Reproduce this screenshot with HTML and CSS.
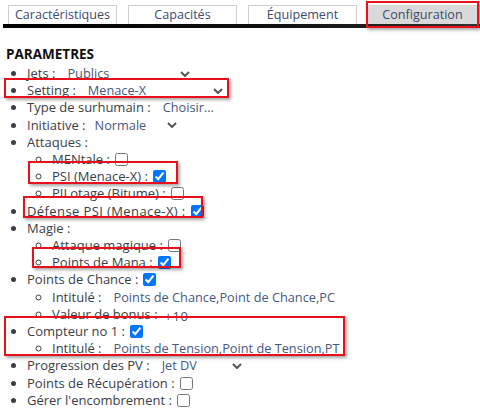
FILE: index.html
```html
<!DOCTYPE html>
<html lang="fr">
<head>
<meta charset="utf-8">
<title>Configuration</title>
<link rel="stylesheet" href="styles.css">
</head>
<body>
<div class="page">
  <nav class="tabs">
    <div class="tab">Caractéristiques</div>
    <div class="tab">Capacités</div>
    <div class="tab">Équipement</div>
    <div class="tab active">Configuration</div>
  </nav>
  <div class="tabbar"></div>

  <main class="content">
    <h3 class="title">PARAMETRES</h3>
    <ul class="list">
      <li><span class="lbl">Jets :</span><span class="sel sel-jets"><span class="val">Publics</span><svg class="chev" viewBox="0 0 10 6"><path d="M1 1 5 5 9 1"/></svg></span></li>
      <li><span class="lbl">Setting :</span><span class="sel sel-setting"><span class="val">Menace-X</span><svg class="chev" viewBox="0 0 10 6"><path d="M1 1 5 5 9 1"/></svg></span></li>
      <li><span class="lbl">Type de surhumain :</span><span class="sel"><span class="val">Choisir...</span></span></li>
      <li><span class="lbl">Initiative :</span><span class="sel sel-init"><span class="val">Normale</span><svg class="chev" viewBox="0 0 10 6"><path d="M1 1 5 5 9 1"/></svg></span></li>
      <li><span class="lbl">Attaques :</span>
        <ul class="sub">
          <li><span class="lbl">MENtale :</span><input class="cb" type="checkbox"></li>
          <li><span class="lbl">PSI (Menace-X) :</span><input class="cb" type="checkbox" checked></li>
          <li><span class="lbl">PILotage (Bitume) :</span><input class="cb" type="checkbox"></li>
        </ul>
      </li>
      <li><span class="lbl lbl-wide">Défense PSI (Menace-X) :</span><input class="cb" type="checkbox" checked></li>
      <li><span class="lbl">Magie :</span>
        <ul class="sub">
          <li><span class="lbl">Attaque magique :</span><input class="cb" type="checkbox"></li>
          <li><span class="lbl">Points de Mana :</span><input class="cb" type="checkbox" checked></li>
        </ul>
      </li>
      <li><span class="lbl">Points de Chance :</span><input class="cb" type="checkbox" checked>
        <ul class="sub">
          <li><span class="lbl">Intitulé :</span><span class="sel"><span class="val">Points de Chance,Point de Chance,PC</span></span></li>
          <li><span class="lbl">Valeur de bonus :</span><span class="sel num"><span class="val">+10</span></span></li>
        </ul>
      </li>
      <li><span class="lbl">Compteur no 1 :</span><input class="cb" type="checkbox" checked>
        <ul class="sub">
          <li><span class="lbl">Intitulé :</span><span class="sel"><span class="val">Points de Tension,Point de Tension,PT</span></span></li>
        </ul>
      </li>
      <li><span class="lbl">Progression des PV :</span><span class="sel sel-prog"><span class="val">Jet DV</span><svg class="chev" viewBox="0 0 10 6"><path d="M1 1 5 5 9 1"/></svg></span></li>
      <li><span class="lbl">Points de Récupération :</span><input class="cb" type="checkbox"></li>
      <li><span class="lbl">Gérer l'encombrement :</span><input class="cb" type="checkbox"></li>
    </ul>
  </main>

  <div class="mark mark-config"></div>
  <div class="mark mark-setting"></div>
  <div class="mark mark-psi"></div>
  <div class="mark mark-defense"></div>
  <div class="mark mark-mana"></div>
  <div class="mark mark-compteur"></div>
</div>
</body>
</html>
```

FILE: styles.css
```css
* { box-sizing: border-box; }
html, body { margin: 0; padding: 0; background: #fff; }
body {
  font-family: "Open Sans", "Liberation Sans", sans-serif;
  font-size: 13px;
  color: #3b3e47;
}
.page {
  position: relative;
  width: 480px;
  height: 416px;
  overflow: hidden;
}
.tabs {
  display: grid;
  grid-template-columns: repeat(4, 120px);
  padding-top: 5px;
}
.tab {
  margin-left: 8px;
  width: 109px;
  height: 19px;
  border: 1px solid #cfcfcf;
  border-bottom: none;
  background: #fff;
  text-align: center;
  line-height: 18px;
  font-size: 12.6px;
  color: #3d4b6e;
}
.tab.active {
  background: #d9d9d9;
  border-color: #d9d9d9;
}
.tabbar {
  height: 4px;
  margin-left: 3px;
  background: linear-gradient(to right, #000 0%, #111 60%, #333 100%);
}
.content {
  padding-left: 6px;
}
.title {
  margin: 17px 0 2px 0;
  font-size: 13.5px;
  font-weight: bold;
  color: #111;
  line-height: 18px;
}
.list {
  margin: 0;
  padding-left: 21px;
  list-style: disc;
}
.list li {
  line-height: 17.2px;
  white-space: nowrap;
}
.sub {
  margin: 0;
  padding-left: 25px;
  list-style: circle;
}
.lbl { color: #3b3e47; }
.lbl-wide { letter-spacing: 0.4px; }
.sel {
  display: inline-flex;
  align-items: center;
  margin-left: 12px;
  font-size: 12.75px;
  color: #47577f;
}
.sel-jets { width: 123px; justify-content: space-between; }
.sel-setting { width: 135px; justify-content: space-between; }
.sel-init { width: 82px; margin-left: 9px; justify-content: space-between; }
.sel-prog { width: 80px; justify-content: space-between; }
.num { position: relative; top: 2px; margin-left: 7px; font-size: 13px; letter-spacing: 0.5px; }
.chev {
  width: 10px;
  height: 6px;
  fill: none;
  stroke: #555;
  stroke-width: 2;
}
.cb {
  width: 13px;
  height: 13px;
  margin: 0 0 0 5px;
  vertical-align: -2px;
  accent-color: #0075ff;
}
.mark {
  position: absolute;
  border: 2px solid #e8101a;
  box-shadow: 2px 2px 3px rgba(0,0,0,0.35);
  pointer-events: none;
}
.mark-config { left: 366px; top: 1px; width: 113px; height: 27px; }
.mark-setting { left: 4px; top: 78px; width: 225px; height: 20px; }
.mark-psi { left: 28px; top: 161px; width: 150px; height: 23px; }
.mark-defense { left: 23px; top: 196px; width: 180px; height: 22px; }
.mark-mana { left: 32px; top: 247px; width: 149px; height: 21px; }
.mark-compteur { left: 4px; top: 316px; width: 341px; height: 40px; }
```
